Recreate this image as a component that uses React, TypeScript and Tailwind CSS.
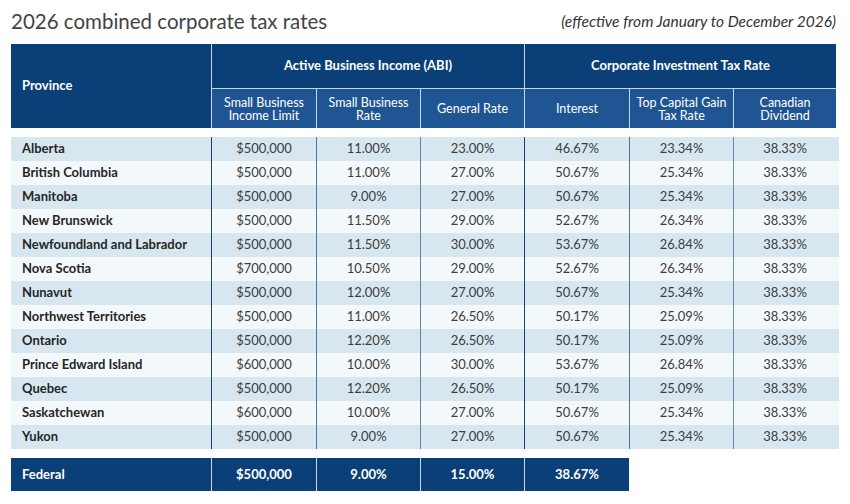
import React from "react";

const rows = [
  ["Alberta", "$500,000", "11.00%", "23.00%", "46.67%", "23.34%", "38.33%"],
  ["British Columbia", "$500,000", "11.00%", "27.00%", "50.67%", "25.34%", "38.33%"],
  ["Manitoba", "$500,000", "9.00%", "27.00%", "50.67%", "25.34%", "38.33%"],
  ["New Brunswick", "$500,000", "11.50%", "29.00%", "52.67%", "26.34%", "38.33%"],
  ["Newfoundland and Labrador", "$500,000", "11.50%", "30.00%", "53.67%", "26.84%", "38.33%"],
  ["Nova Scotia", "$700,000", "10.50%", "29.00%", "52.67%", "26.34%", "38.33%"],
  ["Nunavut", "$500,000", "12.00%", "27.00%", "50.67%", "25.34%", "38.33%"],
  ["Northwest Territories", "$500,000", "11.00%", "26.50%", "50.17%", "25.09%", "38.33%"],
  ["Ontario", "$500,000", "12.20%", "26.50%", "50.17%", "25.09%", "38.33%"],
  ["Prince Edward Island", "$600,000", "10.00%", "30.00%", "53.67%", "26.84%", "38.33%"],
  ["Quebec", "$500,000", "12.20%", "26.50%", "50.17%", "25.09%", "38.33%"],
  ["Saskatchewan", "$600,000", "10.00%", "27.00%", "50.67%", "25.34%", "38.33%"],
  ["Yukon", "$500,000", "9.00%", "27.00%", "50.67%", "25.34%", "38.33%"],
];

// body column dividers: dark at group edges, lighter inside groups
const dividers = [
  "",
  "border-l border-[#1d3f6e]",
  "border-l border-[#4d73a0]",
  "border-l border-[#5f82ab]",
  "border-l border-[#1d3f6e]",
  "border-l border-[#4d73a0]",
  "border-l border-[#6a8bb1]",
];

const cols = "grid grid-cols-[200px_105px_104px_104px_105px_104px_103px]";

export default function App() {
  return (
    <div className="w-[850px] h-[504px] bg-white px-[11px] pt-[4px] font-['Lato','Open_Sans',sans-serif] text-[#333]">
      {/* Title */}
      <div className="flex items-end justify-between h-[30px]">
        <h1 className="text-[20.5px] leading-[26px] text-[#444]">2026 combined corporate tax rates</h1>
        <p className="text-[15.5px] italic text-[#333] mr-[3px] leading-[26px]">(effective from January to December 2026)</p>
      </div>

      {/* Header */}
      <div className={`${cols} mt-[10px] text-white`}>
        <div className="row-span-2 bg-[#0b3f78] flex items-center pl-[11px] text-[13px] font-bold">Province</div>
        <div className="col-span-3 bg-[#0b3f78] h-[44px] flex items-center justify-center text-[13px] font-bold border-l border-[#c9d6e6]">
          Active Business Income (ABI)
        </div>
        <div className="col-span-3 bg-[#0b3f78] h-[44px] flex items-center justify-center text-[13px] font-bold border-l border-[#c9d6e6]">
          Corporate Investment Tax Rate
        </div>
        {["Small Business\nIncome Limit", "Small Business\nRate", "General Rate", "Interest", "Top Capital Gain\nTax Rate", "Canadian\nDividend"].map((t, i) => (
          <div
            key={i}
            className="h-[40px] bg-[#1f5592] border-t border-l border-[#c9d6e6] flex items-center justify-center text-center whitespace-pre-line text-[12.5px] leading-[13px]"
          >
            {t}
          </div>
        ))}
      </div>

      {/* Body */}
      <div className="mt-[9px]">
        {rows.map((r, i) => (
          <div key={r[0]} className={`${cols} h-[24px] ${i % 2 === 0 ? "bg-[#d8e7ef]" : "bg-[#f3f8fb]"}`}>
            {r.map((c, j) => (
              <div
                key={j}
                className={`flex items-center text-[13px] ${dividers[j]} ${
                  j === 0 ? "pl-[11px] font-bold text-[#262626]" : "justify-center text-[#3d3d3d]"
                }`}
              >
                {c}
              </div>
            ))}
          </div>
        ))}
      </div>

      {/* Federal */}
      <div className={`${cols} mt-[9px] h-[33px] text-white font-bold text-[13px]`}>
        <div className="bg-[#0b3f78] flex items-center pl-[11px]">Federal</div>
        <div className="bg-[#0b3f78] flex items-center justify-center border-l border-[#c9d6e6]">$500,000</div>
        <div className="bg-[#0b3f78] flex items-center justify-center border-l border-[#c9d6e6]">9.00%</div>
        <div className="bg-[#0b3f78] flex items-center justify-center border-l border-[#c9d6e6]">15.00%</div>
        <div className="bg-[#0b3f78] flex items-center justify-center border-l border-[#c9d6e6]">38.67%</div>
      </div>
    </div>
  );
}
